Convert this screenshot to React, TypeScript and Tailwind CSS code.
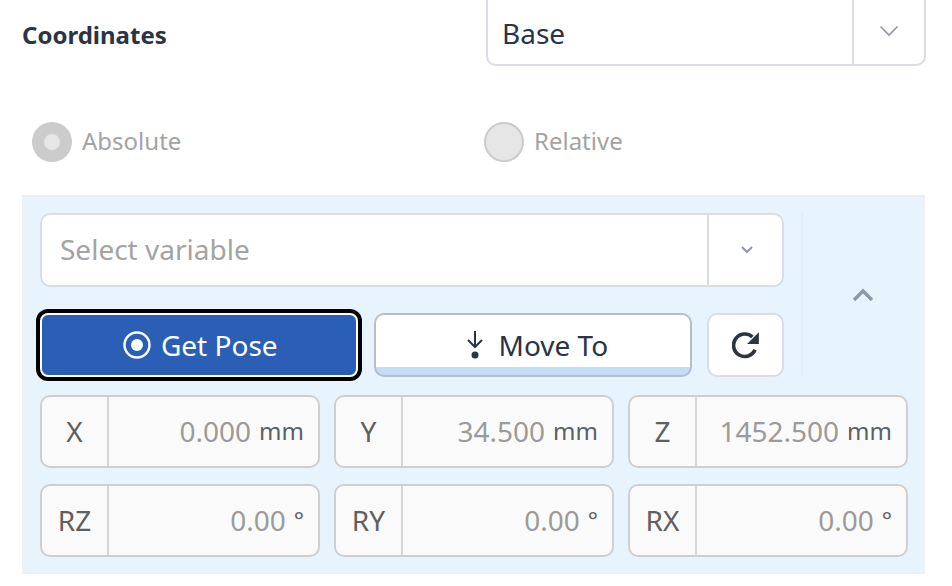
const font = 'font-["Noto_Sans","Open_Sans",sans-serif]';

type PoseField = { label: string; value: string; unit: string };

const poseFields: PoseField[] = [
  { label: 'X', value: '0.000', unit: 'mm' },
  { label: 'Y', value: '34.500', unit: 'mm' },
  { label: 'Z', value: '1452.500', unit: 'mm' },
  { label: 'RZ', value: '0.00', unit: '°' },
  { label: 'RY', value: '0.00', unit: '°' },
  { label: 'RX', value: '0.00', unit: '°' }
];

const Field = ({ field }: { field: PoseField }) => (
  <div className="flex h-[73px] overflow-hidden rounded-[10px] border-2 border-[#cfcfcf] bg-[#fafafa]">
    <div className="flex w-[67px] shrink-0 items-center justify-center border-r-2 border-[#d6d6d6] pb-[2px] text-[28px] text-[#5f5f5f]">
      {field.label}
    </div>
    <div className="flex flex-1 items-center justify-end gap-[8px] pb-[2px] pr-[14px] text-[28px]">
      <span className="text-[#9b9b9b]">{field.value}</span>
      <span className="text-[24px] text-[#5f5f5f]">{field.unit}</span>
    </div>
  </div>
);

const Radio = ({ label, checked }: { label: string; checked?: boolean }) => (
  <div className="flex items-center gap-[10px]">
    {checked ? (
      <span className="flex size-10 items-center justify-center rounded-full bg-[#cccccc]">
        <span className="size-4 rounded-full bg-[#e6e6e6]" />
      </span>
    ) : (
      <span className="size-10 rounded-full border-2 border-[#cccccc] bg-[#e6e6e6]" />
    )}
    <span className="pb-[2px] text-[24px] text-[#a3a3a3]">{label}</span>
  </div>
);

export default function App() {
  return (
    <div className={`${font} h-[586px] w-[952px] overflow-hidden bg-white`}>
      <div className="flex h-[66px] items-end pl-[22px] pr-[26px]">
        <div className="flex h-[66px] flex-1 items-center pt-[4px] text-[24px] font-bold text-[#2a3444]">Coordinates</div>
        <div className="flex h-[76px] w-[440px] shrink-0 overflow-hidden rounded-[10px] border-2 border-[#d9dde4] bg-white">
          <div className="flex flex-1 items-center pl-[14px] pt-[10px] text-[28px] text-[#2a3444]">Base</div>
          <div className="flex w-[72px] items-center justify-center border-l-2 border-[#d9dde4] pt-[6px]">
            <svg width="20" height="12" viewBox="0 0 20 12" fill="none" stroke="#8e96aa" strokeWidth="1.6">
              <path d="M1.500 1.500 10 10l8.500-8.500" />
            </svg>
          </div>
        </div>
      </div>

      <div className="flex h-[129px] items-center pl-[32px] pt-[23px]">
        <div className="w-[452px]">
          <Radio label="Absolute" checked />
        </div>
        <Radio label="Relative" />
      </div>

      <div className="ml-[22px] h-[379px] w-[903px] border-x border-t-2 border-x-[#eef2f5] border-t-[#eeeeee] bg-[#e8f4fd]">
        <div className="flex h-[197px] border-b border-[#eef2f5] pl-[17px] pt-[16px]">
          <div className="w-[744px] shrink-0">
            <div className="flex h-[74px] overflow-hidden rounded-[10px] border-2 border-[#d9dde4] bg-white">
              <div className="flex flex-1 items-center pb-[2px] pl-[18px] text-[28px] text-[#a3a3a3]">Select variable</div>
              <div className="flex w-[75px] items-center justify-center border-l-2 border-[#d9dde4] pl-[2px]">
                <svg width="12" height="8" viewBox="0 0 12 8" fill="none" stroke="#8e96aa" strokeWidth="2">
                  <path d="M1 1l5 5 5-5" />
                </svg>
              </div>
            </div>
            <div className="mt-[26px] flex h-[64px] items-stretch">
              <button className="flex w-[318px] items-center justify-center gap-[10px] rounded-[8px] border-2 border-white bg-[#2a5fb5] pl-[3px] text-[28px] text-white shadow-[0_0_0_4px_#000000]">
                <svg width="28" height="28" viewBox="0 0 28 28">
                  <circle cx="14" cy="14" r="12.500" fill="none" stroke="#ffffff" strokeWidth="2.400" />
                  <circle cx="14" cy="14" r="6" fill="#ffffff" />
                </svg>
                Get Pose
              </button>
              <button className="ml-[16px] flex w-[319px] items-center justify-center gap-[15px] rounded-[10px] border-2 border-[#b3bfcc] bg-[linear-gradient(to_top,#c4dcf6_8px,#ffffff_8px)] pl-[8px] text-[28px] text-[#2a3444]">
                <svg width="18" height="28" viewBox="0 0 18 28" fill="none">
                  <path d="M9 0v16M2 9l7 7 7-7" stroke="#2a3444" strokeWidth="2" />
                  <circle cx="9" cy="24" r="3.500" fill="#2a3444" />
                </svg>
                Move To
              </button>
              <button className="ml-[15px] flex w-[77px] items-center justify-center rounded-[10px] border-2 border-[#d9dde4] bg-white">
                <svg width="28" height="30" viewBox="0 0 26 28" fill="none">
                  <path d="M21.500 18.500A10.500 10.500 0 1 1 19 6.500" stroke="#2a3444" strokeWidth="3.400" />
                  <path d="M25 2v11H14z" fill="#2a3444" />
                </svg>
              </button>
            </div>
          </div>
          <div className="ml-[17px] flex h-[164px] flex-1 items-center justify-center border-l-2 border-[#e2edf5] pr-[2px]">
            <svg width="22" height="14" viewBox="0 0 22 14" fill="none" stroke="#8e96aa" strokeWidth="3.400">
              <path d="M2 12 11 3l9 9" />
            </svg>
          </div>
        </div>
        <div className="ml-[17px] mt-[1px] grid w-[868px] grid-cols-3 gap-x-[14px] gap-y-[16px]">
          {poseFields.map((field) => (
            <Field key={field.label} field={field} />
          ))}
        </div>
      </div>
    </div>
  );
}
